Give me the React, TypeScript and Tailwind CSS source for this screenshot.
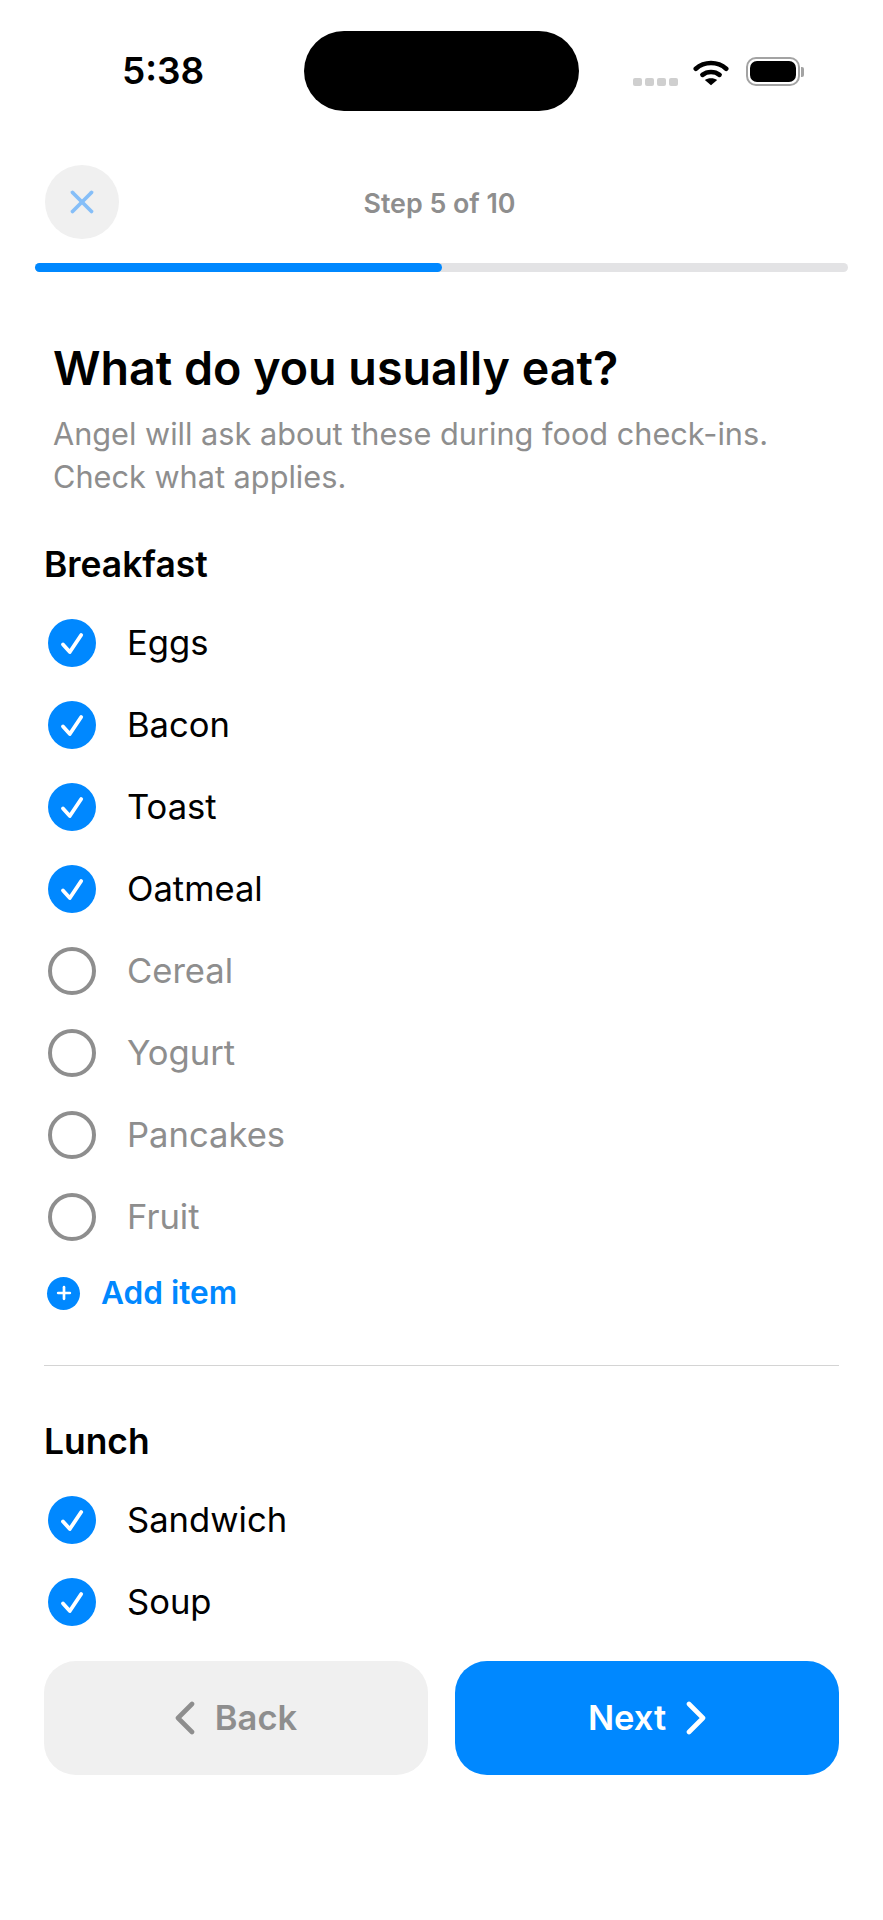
import { Plus, X } from "lucide-react";

const breakfast = [
  { name: "Eggs", on: true },
  { name: "Bacon", on: true },
  { name: "Toast", on: true },
  { name: "Oatmeal", on: true },
  { name: "Cereal", on: false },
  { name: "Yogurt", on: false },
  { name: "Pancakes", on: false },
  { name: "Fruit", on: false },
];

const lunch = [
  { name: "Sandwich", on: true },
  { name: "Soup", on: true },
];

const Row = ({ name, on }: { name: string; on: boolean }) => (
  <div className="flex h-[82px] shrink-0 items-center">
    {on ? (
      <div className="ml-[4px] h-[48px] w-[48px] rounded-full bg-[#0088ff]">
        <svg width="48" height="48" viewBox="0 0 48 48">
          <path
            d="M15 25.5L21.8 33L33.2 16"
            fill="none"
            stroke="#fff"
            strokeWidth="3.8"
            strokeLinecap="round"
            strokeLinejoin="round"
          />
        </svg>
      </div>
    ) : (
      <div className="ml-[4px] h-[48px] w-[48px] rounded-full border-[4px] border-[#8e8e8e]" />
    )}
    <span
      className={`ml-[31px] text-[34.6px] ${on ? "text-black" : "text-[#8e8e8e]"}`}
    >
      {name}
    </span>
  </div>
);

const StatusBar = () => (
  <div className="flex h-[165px] shrink-0 items-start">
    <span className="ml-[122px] mt-[48px] text-[37px] leading-[46px] font-semibold text-black">
      5:38
    </span>
    <div className="ml-[100px] mt-[31px] h-[80px] w-[275px] rounded-[40px] bg-black" />
    <div className="ml-[54px] mt-[57px] flex items-start">
      <div className="mt-[21px] flex gap-[3px]">
        <div className="h-[8px] w-[9px] rounded-[2px] bg-[#cfcfcf]" />
        <div className="h-[8px] w-[9px] rounded-[2px] bg-[#cfcfcf]" />
        <div className="h-[8px] w-[9px] rounded-[2px] bg-[#cfcfcf]" />
        <div className="h-[8px] w-[9px] rounded-[2px] bg-[#cfcfcf]" />
      </div>
      <svg width="36" height="28" viewBox="0 0 38 28" className="ml-[15px] mt-[1px]">
        <path
          d="M3 10.5C12 2.5 26 2.5 35 10.5"
          fill="none"
          stroke="#000"
          strokeWidth="5"
          strokeLinecap="round"
        />
        <path
          d="M10 17C15 13 23 13 28 17"
          fill="none"
          stroke="#000"
          strokeWidth="5"
          strokeLinecap="round"
        />
        <path d="M12.5 22.5C16 19.8 22 19.8 25.5 22.5L19 28Z" fill="#000" />
      </svg>
      <div className="ml-[17px] flex items-center">
        <div className="flex h-[29px] w-[54px] items-center justify-center rounded-[10px] border-2 border-[#a3a3a3]">
          <div className="h-[21px] w-[46px] rounded-[7px] bg-black" />
        </div>
        <div className="ml-[1px] h-[10px] w-[3px] rounded-r-[2px] bg-[#a3a3a3]" />
      </div>
    </div>
  </div>
);

const App = () => {
  return (
    <div
      className="flex h-[1920px] w-[883px] flex-col overflow-hidden bg-white"
      style={{ fontFamily: "Inter, 'Liberation Sans', sans-serif" }}
    >
      <StatusBar />

      <div className="relative flex h-[74px] shrink-0 items-center pl-[45px]">
        <div className="flex h-[74px] w-[74px] items-center justify-center rounded-full bg-[#f0f0f0]">
          <X size={38} strokeWidth={2.4} className="text-[#85bef8]" />
        </div>
        <span className="absolute inset-x-0 top-[18px] pr-[4px] text-center text-[26.8px] font-semibold text-[#8e8e8e]">
          Step 5 of 10
        </span>
      </div>

      <div className="mx-[35px] mt-[24px] h-[9px] shrink-0 rounded-full bg-[#e3e3e5]">
        <div className="h-full w-1/2 rounded-full bg-[#0088ff]" />
      </div>

      <div className="flex h-[1368px] shrink-0 flex-col overflow-hidden px-[44px]">
        <h1 className="ml-[9px] mt-[68px] text-[46.6px] leading-[56px] font-semibold text-black">
          What do you usually eat?
        </h1>
        <p className="ml-[9px] mt-[16px] text-[30.7px] leading-[43px] text-[#8e8e8e]">
          Angel will ask about these during food check-ins.
          <br />
          Check what applies.
        </p>

        <h2 className="mt-[45px] text-[35.4px] leading-[44px] font-semibold text-black">
          Breakfast
        </h2>
        <div className="mt-[15px] flex flex-col">
          {breakfast.map((item) => (
            <Row key={item.name} name={item.name} on={item.on} />
          ))}
        </div>
        <div className="mt-[13px] flex h-[44px] shrink-0 items-center">
          <div className="ml-[3px] flex h-[33px] w-[33px] items-center justify-center rounded-full bg-[#0088ff]">
            <Plus size={20} strokeWidth={3.2} className="text-white" />
          </div>
          <span className="ml-[21px] text-[31.6px] font-semibold text-[#0088ff]">
            Add item
          </span>
        </div>
        <div className="mt-[50px] h-px shrink-0 bg-[#d4d4d4]" />
        <h2 className="mt-[54px] text-[35.4px] leading-[44px] font-semibold text-black">
          Lunch
        </h2>
        <div className="mt-[15px] flex flex-col">
          {lunch.map((item) => (
            <Row key={item.name} name={item.name} on={item.on} />
          ))}
        </div>
      </div>

      <div className="flex shrink-0 gap-[27px] px-[44px] pt-[21px]">
        <button className="flex h-[114px] flex-1 items-center justify-center gap-[20px] rounded-[32px] bg-[#f0f0f0] text-[34.5px] font-semibold text-[#8e8e8e]">
          <svg width="20" height="34" viewBox="0 0 20 34">
            <path
              d="M17 3L3 17L17 31"
              fill="none"
              stroke="currentColor"
              strokeWidth="4.6"
              strokeLinecap="round"
              strokeLinejoin="round"
            />
          </svg>
          <span>Back</span>
        </button>
        <button className="flex h-[114px] flex-1 items-center justify-center gap-[20px] rounded-[32px] bg-[#0088ff] text-[34.5px] font-semibold text-white">
          <span>Next</span>
          <svg width="20" height="34" viewBox="0 0 20 34">
            <path
              d="M3 3L17 17L3 31"
              fill="none"
              stroke="currentColor"
              strokeWidth="4.6"
              strokeLinecap="round"
              strokeLinejoin="round"
            />
          </svg>
        </button>
      </div>
    </div>
  );
};

export default App;
